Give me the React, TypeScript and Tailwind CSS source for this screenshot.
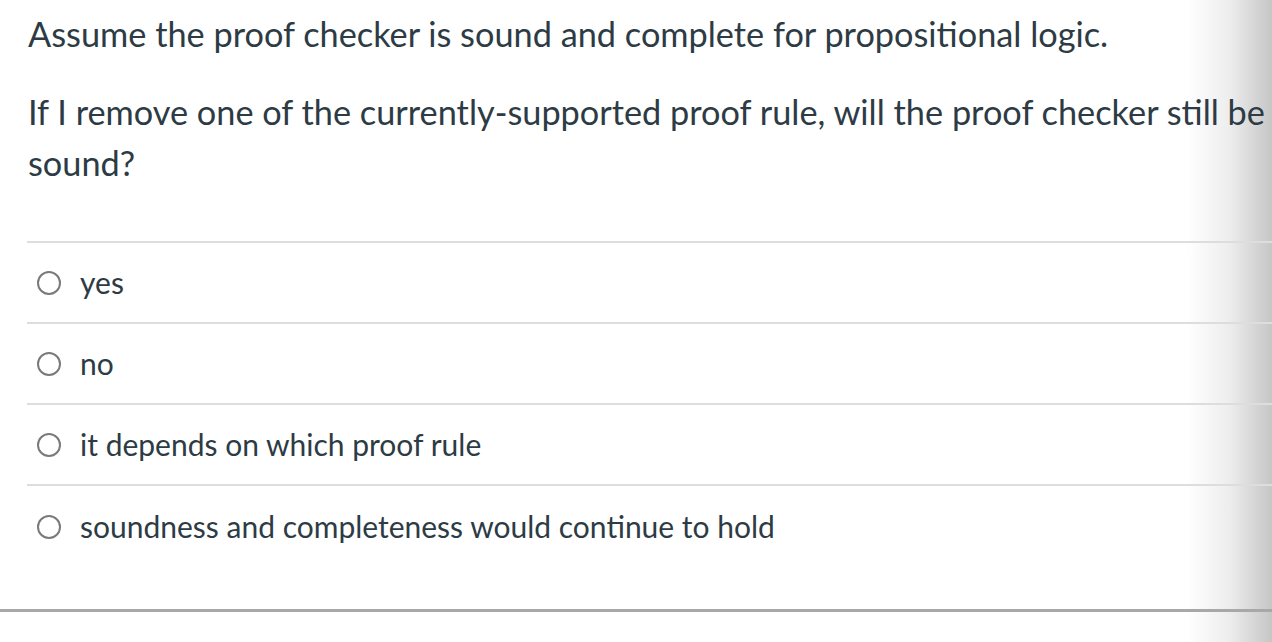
import React from "react";

const answers = [
  "yes",
  "no",
  "it depends on which proof rule",
  "soundness and completeness would continue to hold",
];

function Radio() {
  return (
    <span className="w-[24px] h-[24px] rounded-full border-2 border-[#7a7a7a] bg-white shrink-0" />
  );
}

export default function App() {
  return (
    <div
      className="relative w-[1272px] h-[642px] overflow-hidden bg-white text-[#2d3b45]"
      style={{ fontFamily: "Lato, 'Noto Sans', sans-serif" }}
    >
      {/* soft shadow along the right edge, under the content */}
      <div className="absolute top-0 right-0 h-full w-[85px] bg-gradient-to-r from-white via-[#ededed] to-[#c6c6c6]" />

      <div className="relative">
        <div className="pl-[28px] pt-[8px] w-[1272px]">
          <p className="text-[34.3px] leading-[51px]">
            Assume the proof checker is sound and complete for propositional logic.
          </p>
          <p className="text-[34.3px] leading-[51px] mt-[27px]">
            If I remove one of the currently-supported proof rule, will the proof checker still be sound?
          </p>
        </div>

        <div className="ml-[27px] mt-[53px] border-t-2 border-[#dddddd]">
          {answers.map((a, i) => (
            <div
              key={a}
              className={
                "flex items-center gap-[19px] pl-[10px] h-[81px] " +
                (i < answers.length - 1 ? "border-b-2 border-[#dddddd]" : "")
              }
            >
              <Radio />
              <span className="text-[30px]">{a}</span>
            </div>
          ))}
        </div>

        <div className="mt-[42px] border-t-[3px] border-[#a8a8a8]" />
      </div>
    </div>
  );
}
